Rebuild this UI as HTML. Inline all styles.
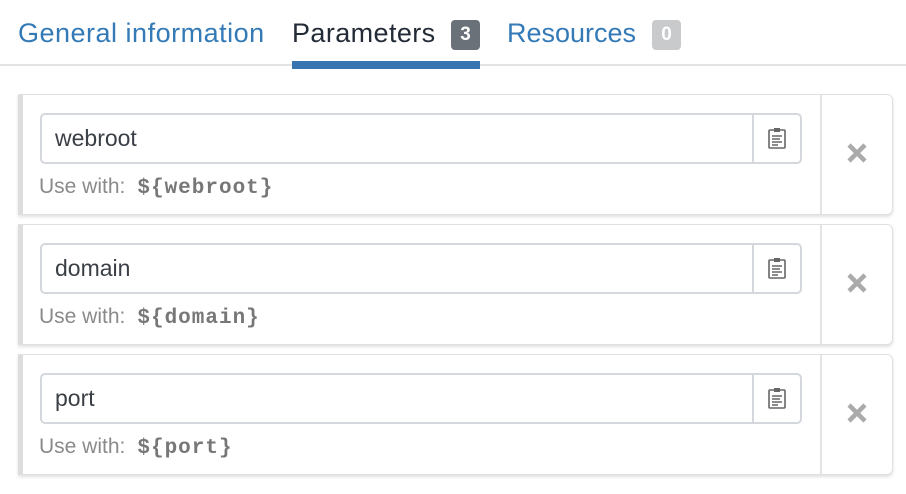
<!DOCTYPE html>
<html><head><style>
*{box-sizing:border-box;margin:0;padding:0}
body{width:906px;height:494px;background:#fff;font-family:"Liberation Sans",Roboto,sans-serif;position:relative;overflow:hidden}
.tab{position:absolute;top:16px;font-size:27px;line-height:34px;color:#337ab7}
.badge{position:absolute;top:20px;width:29px;height:30px;border-radius:4px;color:#fff;font-weight:bold;font-size:19px;text-align:center;line-height:30px}
.line{position:absolute;left:0;top:64px;width:906px;height:2px;background:#e3e3e3}
.ul{position:absolute;left:292px;top:61px;width:188px;height:8px;background:#3874b0}
.card{position:absolute;left:18px;width:875px;height:121px;border:1px solid #e0e0e0;border-left:5px solid #ddd;border-radius:0 6px 6px 0;box-shadow:0 2px 3px rgba(0,0,0,.12);background:#fff}
.inp{position:absolute;left:17px;top:18px;width:762px;height:51px;border:2px solid #d4d7db;border-radius:5px}
.inp span{position:absolute;left:13px;top:10px;font-size:23px;color:#3a3f45}
.clip{position:absolute;right:0;top:0;width:48px;height:47px;border-left:2px solid #d4d7db}
.clip svg{position:absolute;left:13px;top:12px}
.help{position:absolute;left:16px;top:80px;font-size:21px;color:#8a8a8a}
.help b{font-family:"Liberation Mono",monospace;color:#777;font-size:21px;margin-left:12px;letter-spacing:1px}
.div{position:absolute;left:797px;top:0;width:2px;height:119px;background:#e4e4e4}
.x{position:absolute;left:822px;top:46px}
</style></head><body>
<div class="tab" style="left:18px;letter-spacing:0.5px">General information</div>
<div class="tab" style="left:292px;color:#222b36;letter-spacing:0.4px">Parameters</div>
<div class="badge" style="left:451px;background:#6b7179">3</div>
<div class="tab" style="left:507px">Resources</div>
<div class="badge" style="left:652px;background:#c8cacc">0</div>
<div class="line"></div><div class="ul"></div>

<div class="card" style="top:94px">
<div class="inp"><span>webroot</span><div class="clip"><svg width="20" height="22" viewBox="0 0 20 22"><rect x="2" y="3" width="16" height="18" rx="1" fill="none" stroke="#666" stroke-width="1.6"/><rect x="7" y="1" width="6" height="4" fill="#666"/><path d="M5 9h10M5 12h8M5 15h10M5 18h6" stroke="#666" stroke-width="1.4"/></svg></div></div>
<div class="help">Use with:<b>${webroot}</b></div>
<div class="div"></div>
<svg class="x" width="24" height="24" viewBox="0 0 24 24"><path d="M4 4L20 20M20 4L4 20" stroke="#aaa" stroke-width="4.5"/></svg>
</div>

<div class="card" style="top:224px">
<div class="inp"><span>domain</span><div class="clip"><svg width="20" height="22" viewBox="0 0 20 22"><rect x="2" y="3" width="16" height="18" rx="1" fill="none" stroke="#666" stroke-width="1.6"/><rect x="7" y="1" width="6" height="4" fill="#666"/><path d="M5 9h10M5 12h8M5 15h10M5 18h6" stroke="#666" stroke-width="1.4"/></svg></div></div>
<div class="help">Use with:<b>${domain}</b></div>
<div class="div"></div>
<svg class="x" width="24" height="24" viewBox="0 0 24 24"><path d="M4 4L20 20M20 4L4 20" stroke="#aaa" stroke-width="4.5"/></svg>
</div>

<div class="card" style="top:354px">
<div class="inp"><span>port</span><div class="clip"><svg width="20" height="22" viewBox="0 0 20 22"><rect x="2" y="3" width="16" height="18" rx="1" fill="none" stroke="#666" stroke-width="1.6"/><rect x="7" y="1" width="6" height="4" fill="#666"/><path d="M5 9h10M5 12h8M5 15h10M5 18h6" stroke="#666" stroke-width="1.4"/></svg></div></div>
<div class="help">Use with:<b>${port}</b></div>
<div class="div"></div>
<svg class="x" width="24" height="24" viewBox="0 0 24 24"><path d="M4 4L20 20M20 4L4 20" stroke="#aaa" stroke-width="4.5"/></svg>
</div>
</body></html>
